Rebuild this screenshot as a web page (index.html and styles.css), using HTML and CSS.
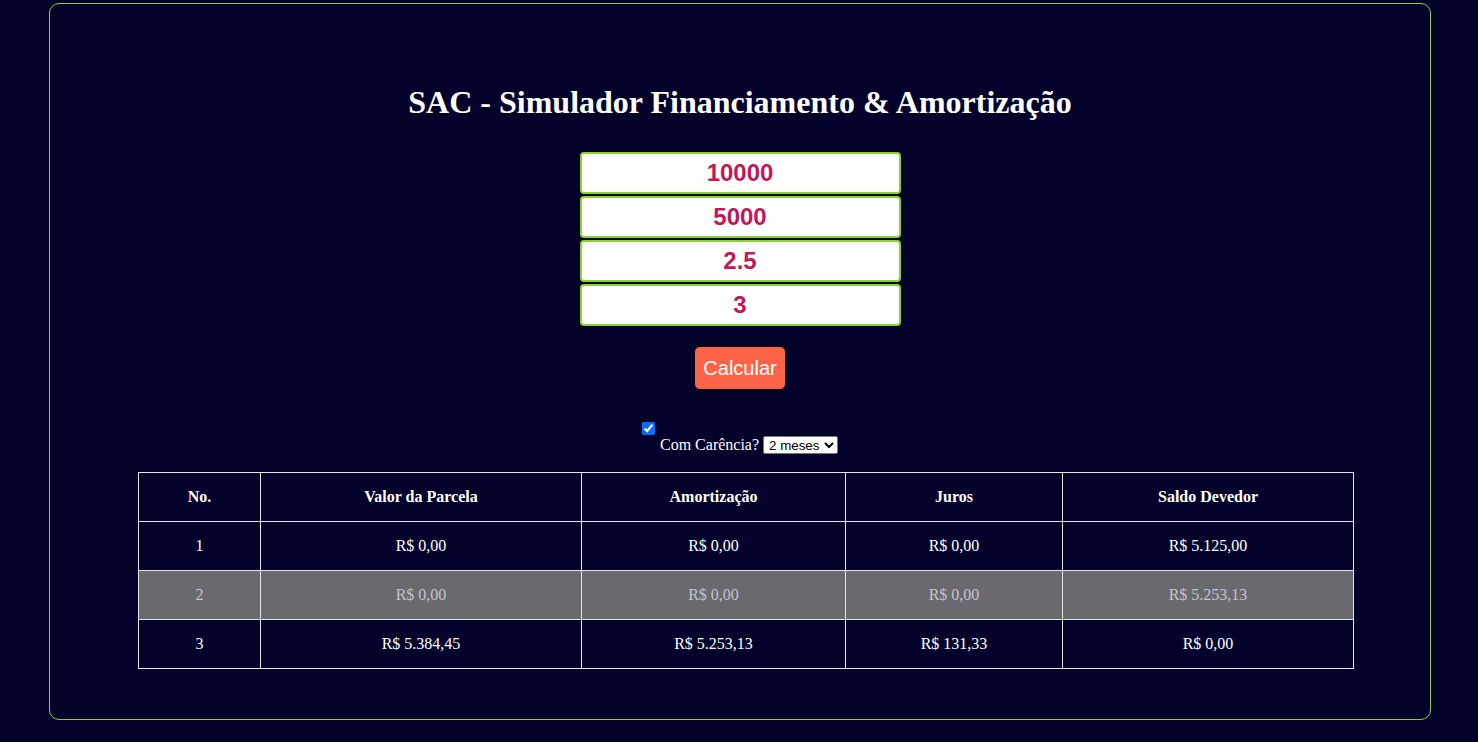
FILE: index.html
```html
<!DOCTYPE html>
<html lang="pt-BR">
<head>
<meta charset="utf-8">
<title>SAC - Simulador</title>
<link rel="stylesheet" href="styles.css">
</head>
<body>
<div class="container">
  <h1 class="title">SAC - Simulador Financiamento &amp; Amortização</h1>
  <div class="inputs">
    <input class="field" type="text" value="10000">
    <input class="field" type="text" value="5000">
    <input class="field" type="text" value="2.5">
    <input class="field" type="text" value="3">
  </div>
  <div class="actions">
    <button class="btn">Calcular</button>
  </div>
  <div class="grace">
    <input class="check" type="checkbox" checked>
    <div class="grace-line">
      <label>Com Carência?</label>
      <select class="sel"><option>2 meses</option></select>
    </div>
  </div>
  <table class="tbl">
    <thead>
      <tr><th class="c1">No.</th><th class="c2">Valor da Parcela</th><th class="c3">Amortização</th><th class="c4">Juros</th><th class="c5">Saldo Devedor</th></tr>
    </thead>
    <tbody>
      <tr><td>1</td><td>R$ 0,00</td><td>R$ 0,00</td><td>R$ 0,00</td><td>R$ 5.125,00</td></tr>
      <tr class="alt"><td>2</td><td>R$ 0,00</td><td>R$ 0,00</td><td>R$ 0,00</td><td>R$ 5.253,13</td></tr>
      <tr><td>3</td><td>R$ 5.384,45</td><td>R$ 5.253,13</td><td>R$ 131,33</td><td>R$ 0,00</td></tr>
    </tbody>
  </table>
</div>
</body>
</html>
```

FILE: styles.css
```css
html, body {
  margin: 0;
  padding: 0;
  background: #03022b;
}
body {
  font-family: "Liberation Serif", "Times New Roman", serif;
  color: #ffffff;
  padding-top: 3px;
}
.container {
  box-sizing: border-box;
  width: 1382px;
  height: 717px;
  margin: 0 0 0 49px;
  border: 1px solid #9acd32;
  border-radius: 10px;
  padding-top: 80px;
  display: flex;
  flex-direction: column;
  align-items: center;
}
.title {
  margin: 0;
  font-size: 32px;
  line-height: 37px;
  font-weight: bold;
  text-align: center;
}
.inputs {
  margin-top: 31px;
  display: flex;
  flex-direction: column;
  gap: 2px;
}
.field {
  box-sizing: border-box;
  width: 321px;
  height: 42px;
  margin: 0;
  border: 2px solid #8ad22d;
  border-radius: 4px;
  background: #ffffff;
  color: #c2185b;
  font-family: "Liberation Sans", Arial, sans-serif;
  font-size: 24px;
  font-weight: bold;
  text-align: center;
  outline: none;
}
.actions {
  margin-top: 20px;
}
.btn {
  box-sizing: border-box;
  width: 92px;
  height: 44px;
  background: #ff6347;
  color: #ffffff;
  border: 1px solid #0a0a0a;
  border-radius: 6px;
  font-family: "Liberation Sans", Arial, sans-serif;
  font-size: 20px;
  padding: 0;
}
.grace {
  align-self: flex-start;
  margin: 32px 0 0 592px;
  display: flex;
  flex-direction: column;
  align-items: flex-start;
}
.check {
  margin: 0;
  width: 13px;
  height: 13px;
  accent-color: #0a6cf5;
}
.grace-line {
  display: flex;
  align-items: center;
  gap: 4px;
  font-size: 16px;
  margin-left: 18px;
  height: 19px;
}
.sel {
  font-family: "Liberation Sans", Arial, sans-serif;
  font-size: 13.33px;
  height: 18px;
  padding: 0 1px;
  background: #ffffff;
  color: #000;
  border: 1px solid #767676;
  border-radius: 2px;
}
.tbl {
  align-self: flex-start;
  margin: 18px 0 0 88px;
  width: 1216px;
  border-collapse: collapse;
  font-size: 16px;
  text-align: center;
}
.tbl th, .tbl td {
  border: 1px solid #e6e6e6;
  height: 48px;
  padding: 0;
}
.tbl th {
  font-weight: bold;
}
.c1 { width: 121px; }
.c2 { width: 320px; }
.c3 { width: 263px; }
.c4 { width: 216px; }
.c5 { width: 290px; }
.alt {
  background: #6a696f;
  color: #c4c4cc;
}
```
